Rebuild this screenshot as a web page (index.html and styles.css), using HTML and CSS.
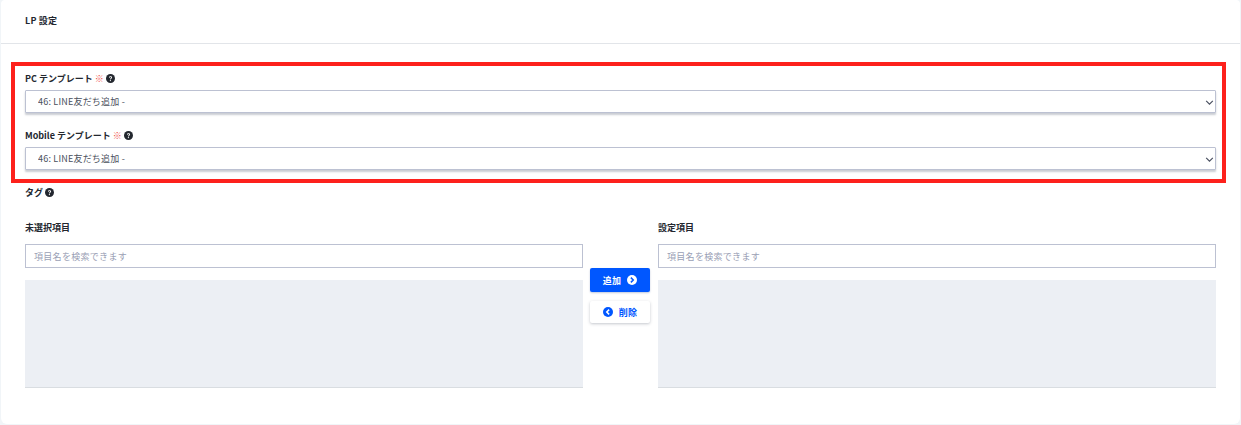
FILE: index.html
```html
<!DOCTYPE html>
<html lang="ja">
<head>
<meta charset="utf-8">
<title>LP 設定</title>
<link rel="stylesheet" href="styles.css">
</head>
<body>
<section class="card">
  <header class="card-header">LP 設定</header>
  <div class="card-body">
    <div class="highlight"></div>
    <div class="field field-pc">
      <label class="label">PC テンプレート <span class="req">※</span>
        <svg class="help" viewBox="0 0 16 16"><use href="#q"/></svg></label>
      <div class="select-wrap">
        <select class="select"><option>46: LINE友だち追加 -</option></select>
        <svg class="chevron" viewBox="0 0 10 6"><path d="M1 1l4 4 4-4" fill="none" stroke="#4a5060" stroke-width="1.400"/></svg>
      </div>
    </div>
    <div class="field field-mobile">
      <label class="label">Mobile テンプレート <span class="req">※</span>
        <svg class="help" viewBox="0 0 16 16"><use href="#q"/></svg></label>
      <div class="select-wrap">
        <select class="select"><option>46: LINE友だち追加 -</option></select>
        <svg class="chevron" viewBox="0 0 10 6"><path d="M1 1l4 4 4-4" fill="none" stroke="#4a5060" stroke-width="1.400"/></svg>
      </div>
    </div>
    <div class="label tag-label">タグ
      <svg class="help" viewBox="0 0 16 16"><use href="#q"/></svg></div>
    <div class="picker">
      <div class="col">
        <div class="label col-title">未選択項目</div>
        <input class="search" placeholder="項目名を検索できます">
        <div class="list"></div>
      </div>
      <div class="actions">
        <button class="btn btn-primary">追加
          <svg class="btn-icon" viewBox="0 0 16 16"><circle cx="8" cy="8" r="8" fill="#fff"/><path d="M6.200 4.200L10 8l-3.800 3.800" fill="none" stroke="#0057ff" stroke-width="2.400"/></svg></button>
        <button class="btn btn-light">
          <svg class="btn-icon" viewBox="0 0 16 16"><circle cx="8" cy="8" r="8" fill="#0057ff"/><path d="M9.800 4.200L6 8l3.800 3.800" fill="none" stroke="#fff" stroke-width="2.400"/></svg>削除</button>
      </div>
      <div class="col">
        <div class="label col-title">設定項目</div>
        <input class="search" placeholder="項目名を検索できます">
        <div class="list"></div>
      </div>
    </div>
  </div>
</section>
<svg class="defs" width="0" height="0">
  <symbol id="q" viewBox="0 0 16 16">
    <circle cx="8" cy="8" r="8" fill="#23272f"/>
    <path d="M5.300 6.200C5.400 4.700 6.500 3.900 8 3.900c1.600 0 2.800.9 2.800 2.300 0 1.200-.7 1.700-1.500 2.200-.6.4-.8.600-.8 1.200H7.100c0-1.100.3-1.600 1.100-2.100.7-.4 1-.7 1-1.200 0-.6-.5-.9-1.200-.9-.8 0-1.200.4-1.300 1.100z" fill="#fff"/>
    <circle cx="7.800" cy="11.700" r="1.100" fill="#fff"/>
  </symbol>
</svg>
</body>
</html>
```
FILE: styles.css
```css
* { box-sizing: border-box; }
html, body { margin: 0; padding: 0; }
body {
  width: 1241px;
  height: 425px;
  overflow: hidden;
  background: #f1f5f8;
  padding: 0 1px 1px;
  font-family: "Noto Sans CJK JP", "Noto Sans", sans-serif;
  color: #23272f;
}
.card {
  height: 424px;
  background: #fff;
  border-radius: 4px 4px 6px 6px;
}
.card-header {
  height: 44px;
  padding: 14px 24px 0;
  font-size: 9px;
  line-height: 13px;
  font-weight: 700;
  letter-spacing: 0.2px;
  border-bottom: 1px solid #e2e5e9;
}
.card-body {
  position: relative;
  padding: 0 24px;
}
.highlight {
  position: absolute;
  left: 10px;
  top: 18px;
  width: 1215px;
  height: 121px;
  border: 4px solid #fd211c;
  pointer-events: none;
}
.label {
  display: block;
  height: 13px;
  font-size: 9px;
  line-height: 13px;
  font-weight: 700;
}
.req { color: #f0524d; font-weight: 400; font-size: 9px; line-height: 1; }
.help { width: 9px; height: 9px; vertical-align: -1px; }
.defs { position: absolute; }
.field-pc { padding-top: 28px; }
.field-mobile { padding-top: 16px; }
.select-wrap { position: relative; margin-top: 5px; }
.select {
  display: block;
  width: 100%;
  height: 23px;
  padding: 0 12px;
  appearance: none;
  background: #fff;
  border: 1px solid #bcc1d2;
  border-radius: 1px;
  box-shadow: 0 2px 2px rgba(80, 88, 110, 0.3);
  font: 9px "Noto Sans CJK JP", sans-serif;
  letter-spacing: 0.2px;
  color: #4a4f5c;
}
.chevron {
  position: absolute;
  right: 2px;
  top: 10px;
  width: 9px;
  height: 5px;
}
.tag-label { margin-top: 16px; }
.picker {
  display: grid;
  grid-template-columns: 558px 75px 558px;
  margin-top: 22px;
}
.col-title { margin-bottom: 10px; }
.search {
  display: block;
  width: 100%;
  height: 24px;
  padding: 0 8px;
  background: #fff;
  border: 1px solid #bcc1d2;
  border-radius: 0;
  font: 9px "Noto Sans CJK JP", sans-serif;
  letter-spacing: 0.3px;
  outline: none;
}
.search::placeholder { color: #9aa0b5; opacity: 1; }
.list {
  height: 108px;
  margin-top: 12px;
  background: #eceff4;
  border-bottom: 1px solid #d9dde1;
}
.actions {
  display: flex;
  flex-direction: column;
  align-items: flex-end;
  gap: 9px;
  padding: 47px 8px 0 7px;
}
.btn {
  display: flex;
  align-items: center;
  justify-content: center;
  gap: 6px;
  width: 60px;
  border: 0;
  border-radius: 2px;
  font: 700 9px "Noto Sans CJK JP", sans-serif;
  letter-spacing: 0.3px;
}
.btn-primary { height: 24px; background: #0057ff; color: #fff; box-shadow: 0 1px 2px rgba(0, 40, 120, 0.25); }
.btn-light { height: 22px; background: #fff; color: #0057ff; box-shadow: 0 1px 3px rgba(60, 70, 90, 0.3); }
.btn-icon { width: 10px; height: 10px; }
```
